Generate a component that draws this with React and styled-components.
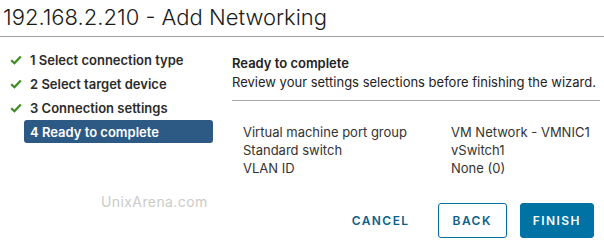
import React from "react";
import styled, { createGlobalStyle } from "styled-components";

const Global = createGlobalStyle`
  html, body { margin: 0; padding: 0; background: #fff; }
  body { font-family: Inter, "Open Sans", sans-serif; color: #313131; }
`;

const Page = styled.div`
  width: 604px;
  height: 249px;
  position: relative;
  overflow: hidden;
  background: #fff;
`;

const Header = styled.div`
  height: 36px;
  border-bottom: 1px solid #a0a0a0;
  padding-left: 3px;
  display: flex;
  align-items: flex-end;
`;

const Title = styled.h1`
  margin: 0 0 5px 0;
  font-family: Inter, sans-serif;
  font-weight: 300;
  font-size: 22px;
  line-height: 28px;
  color: #1a1a1a;
`;

const Body = styled.div`
  display: grid;
  grid-template-columns: 232px 1fr;
  padding-top: 11px;
`;

const Nav = styled.ul`
  list-style: none;
  margin: 0;
  padding: 0 0 0 10px;
  display: flex;
  flex-direction: column;
  gap: 1px;
`;

const NavItem = styled.li`
  display: flex;
  align-items: center;
  height: 23px;
  width: 189px;
  box-sizing: border-box;
  margin-left: ${(p) => (p.$active ? "14px" : "0")};
  padding-left: ${(p) => (p.$active ? "6px" : "0")};
  background: ${(p) => (p.$active ? "#2d5a84" : "transparent")};
  border-radius: 3px;
  color: ${(p) => (p.$active ? "#fff" : "#2b2b2b")};
  font-weight: 600;
  font-size: 13px;
`;

const Check = styled.span`
  width: 20px;
  display: inline-flex;
  align-items: center;
`;

const Content = styled.div`
  display: flex;
  flex-direction: column;
  padding-top: 5px;
  min-width: 0;
`;

const SectionTitle = styled.div`
  font-weight: 600;
  font-size: 13px;
  line-height: 20px;
  color: #222;
`;

const Subtitle = styled.div`
  font-size: 13px;
  line-height: 18px;
  color: #222;
  padding-bottom: 9px;
  border-bottom: 1px solid #a6a6a6;
  margin-right: 4px;
`;

const Table = styled.div`
  display: grid;
  grid-template-columns: 208px 1fr;
  padding: 22px 0 0 11px;
  font-size: 13px;
  line-height: 18px;
  color: #333;
`;

const Watermark = styled.div`
  position: absolute;
  left: 101px;
  top: 193px;
  font-size: 14px;
  letter-spacing: 0.4px;
  color: #cbcbcb;
`;

const Footer = styled.div`
  position: absolute;
  right: 10px;
  top: 203px;
  display: flex;
  align-items: center;
  gap: 13px;
`;

const Button = styled.button`
  height: 35px;
  padding: 0 ${(p) => (p.$variant === "outline" ? "14px" : "12px")};
  margin-right: ${(p) => (p.$variant === "link" ? "2px" : "0")};
  font-family: Inter, sans-serif;
  font-size: 12px;
  font-weight: 600;
  letter-spacing: 0.12em;
  border-radius: 3px;
  cursor: pointer;
  border: 1px solid
    ${(p) => (p.$variant === "outline" || p.$variant === "primary" ? "#0072a3" : "transparent")};
  background: ${(p) => (p.$variant === "primary" ? "#0072a3" : "#fff")};
  color: ${(p) => (p.$variant === "primary" ? "#fff" : "#0b5f8c")};
`;

const CheckIcon = () => (
  <svg width="12" height="10" viewBox="0 0 12 10">
    <path d="M1.2 5.2 L4.4 8.2 L10.8 1.4" fill="none" stroke="#3c8c1e" strokeWidth="2.2" />
  </svg>
);

const steps = [
  "1 Select connection type",
  "2 Select target device",
  "3 Connection settings",
];

const rows = [
  ["Virtual machine port group", "VM Network - VMNIC1"],
  ["Standard switch", "vSwitch1"],
  ["VLAN ID", "None (0)"],
];

export default function App() {
  return (
    <Page>
      <Global />
      <Header>
        <Title>192.168.2.210 - Add Networking</Title>
      </Header>
      <Body>
        <Nav>
          {steps.map((s) => (
            <NavItem key={s}>
              <Check>
                <CheckIcon />
              </Check>
              {s}
            </NavItem>
          ))}
          <NavItem $active>4 Ready to complete</NavItem>
        </Nav>
        <Content>
          <SectionTitle>Ready to complete</SectionTitle>
          <Subtitle>Review your settings selections before finishing the wizard.</Subtitle>
          <Table>
            {rows.map(([k, v]) => (
              <React.Fragment key={k}>
                <div>{k}</div>
                <div>{v}</div>
              </React.Fragment>
            ))}
          </Table>
        </Content>
      </Body>
      <Watermark>UnixArena.com</Watermark>
      <Footer>
        <Button $variant="link">CANCEL</Button>
        <Button $variant="outline">BACK</Button>
        <Button $variant="primary">FINISH</Button>
      </Footer>
    </Page>
  );
}
